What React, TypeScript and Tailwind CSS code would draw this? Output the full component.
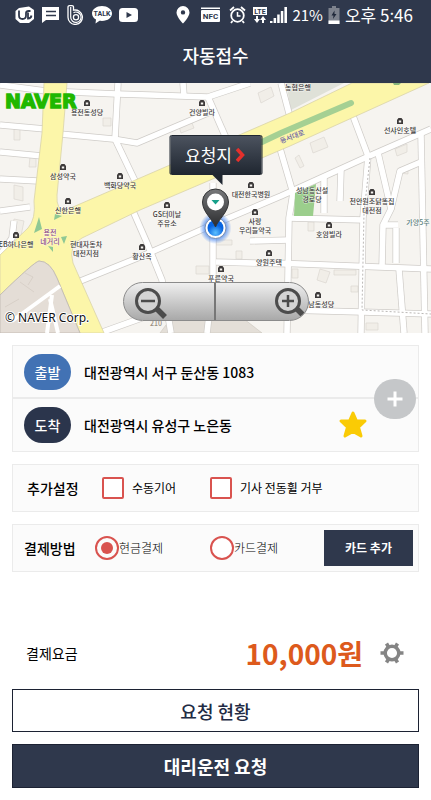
import React, { useState } from 'react';

interface Place {
  x: number;
  y: number;
  lines: string[];
  icon?: boolean;
  color?: string;
}

const places: Place[] = [
  { x: 87, y: 32, lines: ['용전동성당'], icon: true },
  { x: 63, y: 96, lines: ['삼성약국'], icon: true },
  { x: 120, y: 105, lines: ['백화당약국'], icon: true },
  { x: 68, y: 130, lines: ['신한은행'], icon: true },
  { x: 50, y: 152, lines: ['용전', '네거리'], color: '#8d4a86' },
  { x: 86, y: 164, lines: ['현대자동차', '대전지점'] },
  { x: 142, y: 176, lines: ['황산옥'], icon: true },
  { x: 16, y: 164, lines: ['EB하나은행'], icon: true },
  { x: 202, y: 32, lines: ['건양빌라'], icon: true },
  { x: 251, y: 114, lines: ['대전한국병원'], icon: true },
  { x: 167, y: 134, lines: ['GS터미날', '주유소'], icon: true },
  { x: 255, y: 141, lines: ['사랑', '우리들약국'], icon: true },
  { x: 269, y: 182, lines: ['양원주택'], icon: true },
  { x: 221, y: 198, lines: ['푸른약국'], icon: true },
  { x: 400, y: 50, lines: ['선샤인호텔'], icon: true },
  { x: 298, y: 7, lines: ['농협은행'] },
  { x: 312, y: 110, lines: ['성남동신설', '경로당'] },
  { x: 372, y: 121, lines: ['천안원조닭똥집', '대전점'], icon: true },
  { x: 329, y: 154, lines: ['호암빌라'], icon: true },
  { x: 418, y: 142, lines: ['가양5주'], color: '#5c7f7c' },
  { x: 318, y: 224, lines: ['성남동성당'], icon: true },
];

const streets = [
  'M0 2L46 8L117 11L150 12L208 14L250 0',
  'M0 42L45 46',
  'M60 51L113 56L137 60L208 30',
  'M0 69L42 73',
  'M0 96L38 98',
  'M118 0L115 56L136 100',
  'M183 0L184 13',
  'M208 14L226 55',
  'M78 199L140 174L212 142L281 113L367 74L431 46',
  'M133 128L147 160L162 197L171 250',
  'M213 100V198L207 250',
  'M216 179L290 181',
  'M250 158L290 157',
  'M281 0L290 34',
  'M279 62L293 110L289 135L287 250',
  'M353 33L368 73L363 135L361 250',
  'M378 70L391 126L383 142L382 184',
  'M421 52L425 250',
  'M341 86L340 118',
  'M324 94V130',
  'M288 135L364 137',
  'M391 126L400 88L421 79',
  'M396 145L396 180',
  'M383 142H398',
  'M275 180L431 186',
  'M286 227L362 229L431 231',
  'M399 186L404 250',
  'M100 250L150 232L215 228',
  'M0 172L12 155L14 138',
  'M0 128L30 124',
];

const buildings =
  'M103 35h8v8h-8zM14 46h6v11h-6zM30 74l6 1v9h-7zM14 102l9 2v14l-9-2zM14 136l10 2l-3 15l-9-3zM310 60l14-6l4 10l-15 6zM295 75l4-3l5 11l-4 2zM395 66l12-5v8l-10 4zM399 85l9 1v5l-9-1zM308 139h6v9h-6zM320 186l10 3l-4 11l-9-3zM334 187h22v5h-22zM292 186h6v9h-6zM351 203h7v6h-7zM196 183h13v8h-13zM236 168h6v8h-6zM216 157h16v5h-16zM258 10l13-6l3 9l-13 7zM178 40l12-5l4 10l-13 5zM366 240h12v7h-12z';

function MapCanvas() {
  return (
    <svg
      className="block h-full w-full"
      viewBox="0 0 431 250"
      preserveAspectRatio="xMidYMid slice"
      role="img"
      aria-label="지도"
    >
      <rect width="431" height="250" fill="#f6f4f0" />
      <path d="M286 0H344L291 27Z" fill="#dfe1d8" />
      <path d="M172 234L235 229L262 250H160Z" fill="#e4dfd8" stroke="#cbc6be" strokeWidth="0.6" />
      <path d={buildings} fill="#f1eee8" stroke="#dbd7d1" strokeWidth="0.7" />
      <g fill="none" strokeLinejoin="round">
        {streets.map((d) => (
          <path key={d} d={d} stroke="#cfccc8" strokeWidth="7" />
        ))}
        {streets.map((d) => (
          <path key={d} d={d} stroke="#fff" strokeWidth="5.6" />
        ))}
      </g>
      <path d="M370 75L364 130L362 227L431 231" fill="none" stroke="#a9a6a3" strokeWidth="0.8" strokeDasharray="2 2" />

      <path
        d="M44 0H67L63 50L57 112Q56 128 66 127L140 95L290 30L352 0H429L290 63L140 127L82 155Q68 162 73 180L104 250H80L57 195Q50 178 39 178Q34 179 0 212V172L28 145Q36 136 34 118L42 50Z"
        fill="#fcf6a9"
        stroke="#d9d3a8"
        strokeWidth="0.8"
      />
      <path d="M0 212Q34 179 39 178Q50 178 57 195L80 250H0Z" fill="#e4ddd6" stroke="#bdb6ae" strokeWidth="0.8" />
      <path d="M60 203L12 238M52 212L47 250M50 216L58 250" fill="none" stroke="#fff" strokeWidth="4" />
      <path d="M25 190l8 4l-5 8M20 199l14 10M5 224l14-8" fill="none" stroke="#d2cac2" strokeWidth="0.7" />

      <path d="M262 59L281 50L351 20" fill="none" stroke="#a5d093" strokeWidth="6" strokeLinecap="round" />
      <path d="M393 0h8l-2 2h-5z" fill="#86b47a" />
      <path d="M295 110L316 101L313 133H294Z" fill="#9bce8c" />
      <path d="M39 134L42 146L34 150ZM55 131L62 133L54 137ZM61 154L67 153L64 161ZM48 163L53 164V169Z" fill="#8fc894" />

      <g
        className="font-['Noto_Sans_CJK_KR',sans-serif]"
        fontSize="7"
        fontWeight="500"
        textAnchor="middle"
      >
        {places.map((p) => (
          <g key={p.lines[0]} fill={p.color || '#3d3a3a'}>
            {p.icon && (
              <path
                transform={`translate(${p.x} ${p.y - 12})`}
                fillRule="evenodd"
                d="M-3 -1L-1.5 -3H1.5L3 -1V3H-3ZM-1.2 -0.6V1.4H1.2V-0.6Z"
              />
            )}
            {p.lines.map((line, i) => (
              <text
                key={line}
                x={p.x}
                y={p.y + i * 9}
                stroke="#fff"
                strokeWidth="1"
                strokeOpacity="0.6"
                paintOrder="stroke"
              >
                {line}
              </text>
            ))}
          </g>
        ))}
        <text fill="#6c64a8" transform="translate(293 56) rotate(-20)">동서대로</text>
        <text x="156" y="243" fill="#9a8f80">210</text>
      </g>

      <text
        x="5"
        y="25"
        className="font-['DejaVu_Sans',sans-serif]"
        fontSize="19"
        fontWeight="700"
        fill="#1fb800"
        stroke="#1fb800"
        strokeWidth="1.4"
      >
        NAVER
      </text>
      <text
        x="5"
        y="239"
        className="font-['Noto_Sans',sans-serif]"
        fontSize="12"
        fill="#111"
        stroke="#fff"
        strokeWidth="2"
        paintOrder="stroke"
      >
        © NAVER Corp.
      </text>
    </svg>
  );
}

function Pin() {
  return (
    <svg className="-mt-px block" width="40" height="60" viewBox="0 0 40 60" aria-hidden="true">
      <defs>
        <radialGradient id="glow">
          <stop offset="0.5" stopColor="#3b7ff0" />
          <stop offset="1" stopColor="#3b7ff0" stopOpacity="0" />
        </radialGradient>
        <radialGradient id="dot" cx="0.5" cy="0.8">
          <stop offset="0" stopColor="#5cc0ff" />
          <stop offset="1" stopColor="#0864e0" />
        </radialGradient>
        <linearGradient id="pin" x1="0" y1="0" x2="0" y2="1">
          <stop offset="0" stopColor="#77787a" />
          <stop offset="1" stopColor="#2b2c2e" />
        </linearGradient>
      </defs>
      <circle cx="20" cy="44" r="16" fill="url(#glow)" />
      <circle cx="20" cy="44" r="10.5" fill="#fff" stroke="#7d8fae" strokeWidth="1" />
      <circle cx="20" cy="44" r="8" fill="url(#dot)" />
      <path d="M20 43C17 35 7 28 7 18A13 13 0 0 1 33 18C33 28 23 35 20 43Z" fill="url(#pin)" stroke="#333436" />
      <circle cx="20" cy="18" r="8.5" fill="#fff" />
      <path d="M16 16H24L20 20.5Z" fill="#16a08a" />
    </svg>
  );
}

function Magnifier({ plus = false }: { plus?: boolean }) {
  return (
    <svg width="36" height="36" viewBox="0 0 36 36" fill="none" aria-hidden="true">
      <path d="M23 23L33 33" stroke="#4c4c4c" strokeWidth="5.5" />
      <circle cx="16" cy="17" r="11.5" fill="#d4d4d4" stroke="#4c4c4c" strokeWidth="3" />
      <path d={plus ? 'M10 17H22M16 11V23' : 'M9 17H23'} stroke="#4c4c4c" strokeWidth="2.5" />
    </svg>
  );
}

function StatusBar() {
  return (
    <div className="flex h-7 items-center justify-between pr-[18px] pl-[15px] pt-0.5 text-white">
      <div className="flex items-center gap-[7px]">
        <svg width="20" height="18" viewBox="0 0 20 18">
          <path d="M4 2L14 0.5L19 4V13L14 17H5L0.5 13V5Z" fill="#fff" />
          <path
            d="M4 4.5V9.5Q4 13 7.500 13Q11 13 11 9.5V7Q11 5 13.5 5H15.500M13 6.500V12.5Q16 12.500 16.500 9.500"
            fill="none"
            stroke="#2f384c"
            strokeWidth="1.8"
          />
        </svg>
        <svg width="18" height="18" viewBox="0 0 18 18">
          <path d="M0 1H17V14H4L0 17Z" fill="#fff" />
          <path d="M4 5.5H14M4 9.5H14" stroke="#2f384c" strokeWidth="1.5" />
        </svg>
        <svg width="18" height="20" viewBox="0 0 18 20" fill="none" stroke="#fff">
          <path d="M1 12V2Q1 0.7 2.500 0.7H5Q6.500 0.7 6.500 2V5.200A7.200 7.200 0 1 1 1 12Z" strokeWidth="1.3" />
          <path d="M3.700 2V12A5.200 5.200 0 1 0 6.500 7.600" strokeWidth="1.2" />
          <circle cx="9" cy="12.3" r="2.6" strokeWidth="1.3" />
        </svg>
        <svg width="20" height="18" viewBox="0 0 20 18">
          <path d="M10 0C4.500 0 0 3.300 0 7.500C0 10 1.700 12.300 4 13.500L3.500 17.500L7.500 14.800C15 15.800 20 12 20 7.500C20 3.300 15.500 0 10 0Z" fill="#fff" />
          <text x="10" y="10" textAnchor="middle" fontSize="7" fontWeight="700" fill="#2f384c" className="font-['Roboto',sans-serif]">TALK</text>
        </svg>
        <svg width="19" height="18" viewBox="0 0 19 18">
          <rect y="2" width="19" height="14" rx="3.5" fill="#fff" />
          <path d="M7.500 6L13 9L7.500 12Z" fill="#2f384c" />
        </svg>
      </div>
      <div className="flex items-center gap-[5px]">
        <svg className="mr-1.5" width="14" height="18" viewBox="0 0 14 18">
          <path fillRule="evenodd" d="M7 0A6.600 6.600 0 0 1 13.500 6.500C13.500 11 7 17.500 7 17.500S0.500 11 0.500 6.500A6.600 6.600 0 0 1 7 0ZM7 4.200A2.200 2.200 0 1 0 7 8.600A2.200 2.200 0 1 0 7 4.200Z" fill="#fff" />
        </svg>
        <svg className="mr-1" width="19" height="16" viewBox="0 0 19 16">
          <path d="M0 0.500H19V2H0Z" fill="#fff" />
          <rect y="3" width="19" height="12" rx="1" fill="#fff" />
          <text x="9.5" y="12" textAnchor="middle" fontSize="8" fontWeight="700" fill="#2f384c" className="font-['Roboto',sans-serif]">NFC</text>
        </svg>
        <svg className="mr-0.5" width="17" height="18" viewBox="0 0 17 18" fill="none" stroke="#fff">
          <circle cx="8.5" cy="9.5" r="6.3" strokeWidth="1.8" />
          <path d="M8.500 6V10H11.500" strokeWidth="1.5" />
          <path d="M1 4.500L5 1M16 4.500L12 1M3.500 15L2 17M13.500 15L15 17" strokeWidth="1.8" />
        </svg>
        <svg width="14" height="18" viewBox="0 0 14 18">
          <rect y="1" width="14" height="8" fill="#fff" />
          <text x="7" y="7.5" textAnchor="middle" fontSize="7" fontWeight="700" fill="#2f384c" className="font-['Roboto',sans-serif]">LTE</text>
          <path d="M3 10H5V13H7L4 17L1 13H3ZM9 17H11V14H13L10 10L7 14H9Z" fill="#fff" />
        </svg>
        <svg className="-ml-0.5" width="17" height="18" viewBox="0 0 17 18" fill="#fff">
          <path d="M0 15H2.500V17H0ZM3.600 12H6.100V17H3.600ZM7.200 8.500H9.700V17H7.200ZM10.800 5H13.300V17H10.800ZM14.400 1H17V17H14.400Z" />
        </svg>
        <span className="text-[15px] leading-5">21%</span>
        <svg width="12" height="18" viewBox="0 0 12 18">
          <path d="M4 0H8V2H11.500V18H0.500V2H4Z" fill="#7d828d" />
          <path d="M0.500 14.500H11.500V18H0.500Z" fill="#fff" />
          <path d="M6.500 4.500L3.500 9.500H5.500L5 13L8.500 8H6.500Z" fill="#20283a" />
        </svg>
        <span className="text-[17px] leading-5">오후 5:46</span>
      </div>
    </div>
  );
}

const checkClass =
  'size-[22px] shrink-0 appearance-none rounded-xs border-2 border-[#d9534f] bg-white checked:bg-[#d9534f] checked:bg-clip-content p-[3px]';
const radioClass =
  'size-6 shrink-0 appearance-none rounded-full border-2 border-[#d9534f] bg-white checked:bg-[#d9534f] checked:bg-clip-content p-1';
const cardClass = 'border border-[#ebebeb] bg-[#fbfbfb]';

const App = () => {
  const [payment, setPayment] = useState('cash');
  const [manualGear, setManualGear] = useState(false);
  const [noWheel, setNoWheel] = useState(false);

  return (
    <div className="min-h-screen bg-white font-['Noto_Sans_CJK_KR',sans-serif] text-black">
      <header className="bg-[#2f384c]">
        <StatusBar />
        <h1 className="h-[55px] text-center text-lg leading-[54px] font-medium text-white">자동접수</h1>
      </header>

      <section className="relative h-[250px] overflow-hidden">
        <MapCanvas />
        <div className="absolute top-[52px] left-1/2 flex -translate-x-1/2 flex-col items-center">
          <button
            type="button"
            className="flex h-10 w-[93px] items-center justify-center gap-1 rounded-xs border border-[#1f2630] bg-linear-to-b from-[#4c535f] to-[#202731] text-[17px] text-white"
          >
            요청지
            <svg width="10" height="14" viewBox="0 0 10 14" fill="none" aria-hidden="true">
              <path d="M1.500 1L7 7L1.500 13" stroke="#e5302c" strokeWidth="3.5" />
            </svg>
          </button>
          <svg className="-mt-px block" width="20" height="11" viewBox="0 0 20 11" aria-hidden="true">
            <path d="M6 0H17V11Z" fill="#202731" />
          </svg>
          <Pin />
        </div>
        <div className="absolute bottom-3 left-1/2 flex h-[39px] w-[186px] -translate-x-1/2 overflow-hidden rounded-full border border-[#8b8b8b] bg-linear-to-b from-[#efefef] to-[#a9a9a9]">
          <button type="button" aria-label="축소" className="flex w-1/2 items-center border-r-2 border-[#777] pl-2">
            <Magnifier />
          </button>
          <button type="button" aria-label="확대" className="flex w-1/2 items-center justify-end">
            <Magnifier plus />
          </button>
        </div>
      </section>

      <main className="flex flex-col gap-3 px-3 pt-3">
        <section className={`relative ${cardClass}`}>
          <div className="flex h-[53px] items-center gap-[13px] border-b-2 border-[#ebebeb] pl-[11px]">
            <span className="flex h-9 w-[47px] items-center justify-center rounded-full bg-[#4272b4] text-sm font-medium text-white">
              출발
            </span>
            <span className="text-sm font-medium">대전광역시 서구 둔산동 1083</span>
          </div>
          <div className="flex h-[52px] items-center gap-[13px] pl-[11px]">
            <span className="flex h-9 w-[47px] items-center justify-center rounded-full bg-[#2b354c] text-sm font-medium text-white">
              도착
            </span>
            <span className="flex-1 text-sm font-medium">대전광역시 유성구 노은동</span>
            <button type="button" aria-label="즐겨찾기" className="mr-[50px]">
              <svg width="30" height="30" viewBox="0 0 30 30">
                <path
                  d="M15 3L18.500 11H27L20.500 17.200L23 26L15 21.500L7 26L9.500 17.200L3 11H11.500Z"
                  fill="#facb05"
                  stroke="#facb05"
                  strokeWidth="3"
                  strokeLinejoin="round"
                />
              </svg>
            </button>
          </div>
          <button
            type="button"
            aria-label="경유지 추가"
            className="absolute top-1/2 right-0.5 flex h-10 w-[42px] -translate-y-1/2 items-center justify-center rounded-full bg-[#c5c7c9]"
          >
            <svg width="16" height="16" viewBox="0 0 16 16">
              <path d="M8 0.500V15.500M0.500 8H15.500" stroke="#fff" strokeWidth="3" />
            </svg>
          </button>
        </section>

        <section className={`flex h-12 items-center pl-3.5 ${cardClass}`}>
          <h2 className="w-[75px] text-sm font-medium">추가설정</h2>
          <label className="flex w-[108px] items-center gap-2 text-xs">
            <input
              type="checkbox"
              className={checkClass}
              checked={manualGear}
              onChange={(event) => setManualGear(event.target.checked)}
            />
            수동기어
          </label>
          <label className="flex items-center gap-2 text-xs">
            <input
              type="checkbox"
              className={checkClass}
              checked={noWheel}
              onChange={(event) => setNoWheel(event.target.checked)}
            />
            기사 전동휠 거부
          </label>
        </section>

        <section className={`flex h-12 items-center pr-[5px] pl-[11px] ${cardClass}`}>
          <h2 className="w-[71px] text-sm font-medium">결제방법</h2>
          <label className="flex w-[115px] items-center text-xs font-light">
            <input
              type="radio"
              name="payment"
              className={radioClass}
              checked={payment === 'cash'}
              onChange={() => setPayment('cash')}
            />
            현금결제
          </label>
          <label className="flex flex-1 items-center text-xs font-light">
            <input
              type="radio"
              name="payment"
              className={radioClass}
              checked={payment === 'card'}
              onChange={() => setPayment('card')}
            />
            카드결제
          </label>
          <button type="button" className="h-9 w-[89px] bg-[#2f384c] text-xs font-bold text-white">
            카드 추가
          </button>
        </section>

        <section className="mt-[44px] flex h-[49px] items-center pr-3.5 pl-3.5">
          <h2 className="flex-1 text-sm">결제요금</h2>
          <strong className="text-[28px] leading-10 font-bold text-[#dd5a1c]">10,000원</strong>
          <button type="button" aria-label="요금 설정" className="ml-4">
            <svg width="26" height="26" viewBox="0 0 26 26" fill="none" stroke="#858585">
              <path
                d="M1.500 13H24.500M7.500 3.500L18.500 22.500M18.500 3.500L7.500 22.500"
                strokeWidth="3.5"
              />
              <circle cx="13" cy="13" r="6.8" fill="#fff" strokeWidth="3.5" />
            </svg>
          </button>
        </section>

        <button
          type="button"
          className="h-[43px] border border-[#1c2233] bg-white text-lg font-medium text-[#222b44]"
        >
          요청 현황
        </button>
        <button
          type="button"
          className="h-11 border border-[#1c2233] bg-[#2f384c] text-lg font-bold text-white"
        >
          대리운전 요청
        </button>
      </main>
    </div>
  );
};

export default App;
